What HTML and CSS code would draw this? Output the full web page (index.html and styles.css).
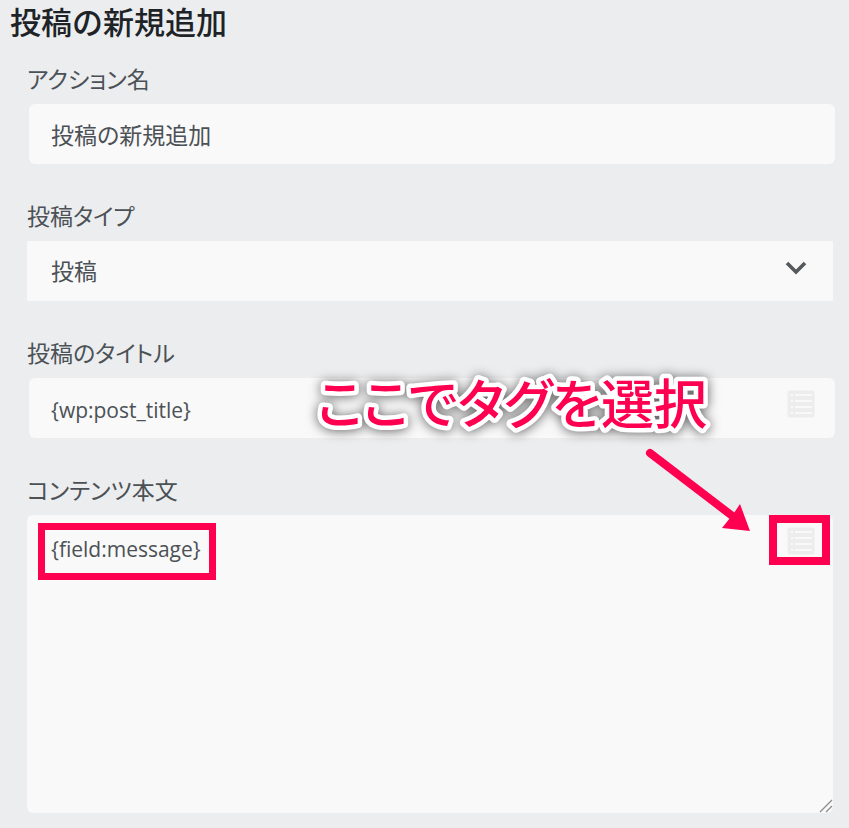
FILE: index.html
```html
<!DOCTYPE html>
<html lang="ja">
<head>
<meta charset="utf-8">
<title>投稿の新規追加</title>
<link rel="stylesheet" href="styles.css">
</head>
<body>
<svg class="sprite" aria-hidden="true">
  <symbol id="list" viewBox="0 0 28 28">
    <rect x="0.5" y="0.5" width="27" height="27" rx="2" fill="#ededed"/>
    <path d="M4 5h2M4 11h2M4 17h2M4 23h2M8 5h17M8 11h17M8 17h17M8 23h17" stroke="#f9f9f9" stroke-width="2"/>
  </symbol>
</svg>
<main class="panel">
  <h1>投稿の新規追加</h1>
  <form class="form">
    <div class="field">
      <label for="name">アクション名</label>
      <div class="control shifted"><input id="name" type="text" value="投稿の新規追加"></div>
    </div>
    <div class="field">
      <label for="type">投稿タイプ</label>
      <div class="control">
        <select id="type"><option>投稿</option></select>
        <svg class="chevron" viewBox="0 0 22 14" aria-hidden="true"><path d="M2 2l9 9 9-9" fill="none" stroke="#55595c" stroke-width="3.6"/></svg>
      </div>
    </div>
    <div class="field">
      <label for="title">投稿のタイトル</label>
      <div class="control shifted">
        <input id="title" class="code" type="text" value="{wp:post_title}">
        <button class="tags" type="button" aria-label="タグ"><svg><use href="#list"/></svg></button>
      </div>
    </div>
    <div class="field">
      <label for="body">コンテンツ本文</label>
      <div class="control">
        <textarea id="body" class="code" spellcheck="false">{field:message}</textarea>
        <button class="tags" type="button" aria-label="タグ"><svg><use href="#list"/></svg></button>
        <svg class="grip" viewBox="0 0 14 14" aria-hidden="true"><path d="M1 13L13 1M7 13L13 7" stroke="#8c8c8c" stroke-width="1.3"/></svg>
        <span class="mark mark-text"></span>
        <span class="mark mark-icon"></span>
        <svg class="callout" viewBox="0 0 450 180" aria-hidden="true">
          <text x="17" y="64">ここでタグを選択</text>
          <path d="M350 93L435 158" stroke="#ff0050" stroke-width="8" stroke-linecap="round"/>
          <path d="M450 171L440 144L434 153L422 168Z" fill="#ff0050"/>
        </svg>
      </div>
    </div>
  </form>
</main>
</body>
</html>
```
FILE: styles.css
```css
* { box-sizing: border-box; }

body {
  margin: 0;
  background: #ebedef;
  color: #4c5156;
  font-family: "Open Sans", "Noto Sans CJK JP", sans-serif;
  font-size: 23px;
  line-height: 32px;
}

.sprite { display: none; }

.panel { padding: 0 16px 15px 10px; }

h1 {
  margin: 0;
  color: #1d2327;
  font-size: 31px;
  font-weight: 500;
  line-height: 44px;
}

.form {
  display: grid;
  gap: 36px;
  padding: 19px 0 0 17px;
  font-feature-settings: "palt";
}

.field {
  display: flex;
  flex-direction: column;
  gap: 9px;
}

.field label { align-self: flex-start; }

.control {
  position: relative;
  display: flex;
}

.shifted { margin: 0 -2px 0 2px; }

input,
select,
textarea {
  display: block;
  width: 100%;
  height: 60px;
  margin: 0;
  padding: 0 24px;
  border: 0;
  border-radius: 6px;
  outline: 0;
  background: #f9f9f9;
  color: inherit;
  font: inherit;
  font-feature-settings: inherit;
  appearance: none;
}

input { padding-left: 22px; }

select { border-radius: 0; }

textarea {
  height: 298px;
  resize: vertical;
}

textarea::-webkit-resizer { background: transparent; }

.code {
  padding-top: 4px;
  font-size: 21px;
}

textarea.code { padding-top: 18px; }

.chevron {
  position: absolute;
  top: 20px;
  right: 26px;
  width: 22px;
  height: 14px;
}

.tags {
  position: absolute;
  top: 12px;
  right: 18px;
  width: 28px;
  height: 28px;
  padding: 0;
  border: 0;
  background: none;
}

.tags svg {
  display: block;
  width: 28px;
  height: 28px;
}

.shifted .tags { right: 20px; }

.grip {
  position: absolute;
  right: 0;
  bottom: 0;
  width: 14px;
  height: 14px;
  pointer-events: none;
}

.mark {
  position: absolute;
  border: 7px solid #ff0050;
  pointer-events: none;
}

.mark-text {
  top: 8px;
  left: 11px;
  width: 178px;
  height: 57px;
}

.mark-icon {
  top: 0;
  right: 3px;
  width: 61px;
  height: 50px;
  border-width: 8px;
}

.callout {
  position: absolute;
  top: -155px;
  right: 83px;
  width: 450px;
  height: 180px;
  overflow: visible;
  pointer-events: none;
}

.callout text {
  fill: #ff0050;
  stroke: #fff;
  stroke-width: 9px;
  stroke-linejoin: round;
  paint-order: stroke;
  font-size: 53px;
  font-weight: 500;
  filter: drop-shadow(0 1px 6px rgb(0 0 0 / 60%));
}
```
